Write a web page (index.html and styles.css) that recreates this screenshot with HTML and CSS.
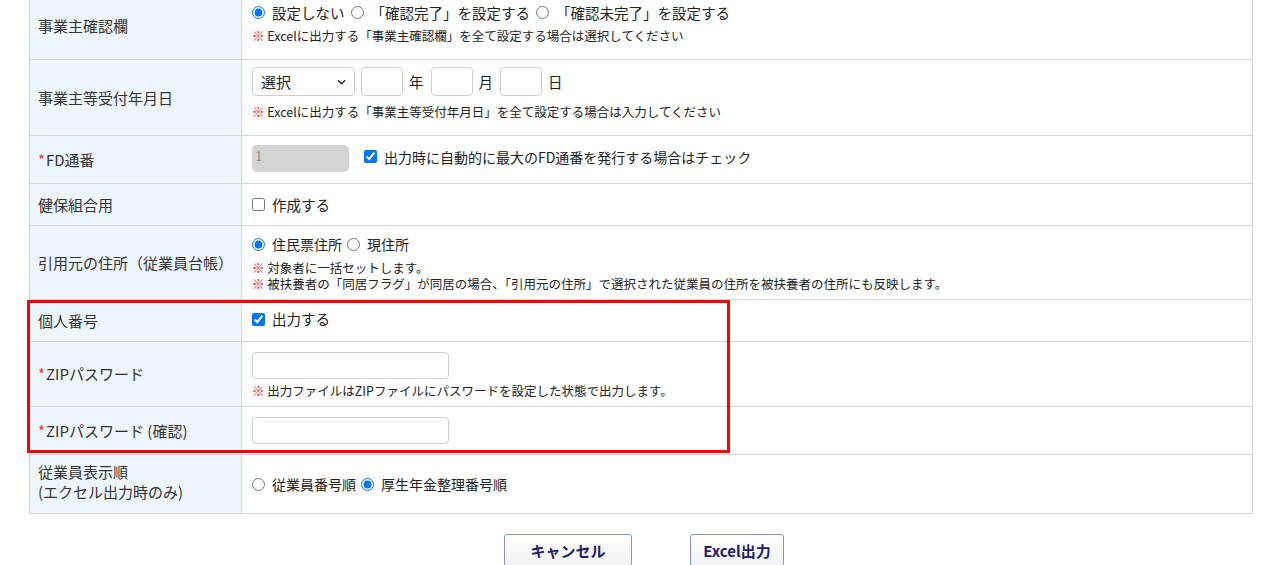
FILE: index.html
```html
<!DOCTYPE html>
<html lang="ja">
<head>
<meta charset="utf-8">
<title>出力設定</title>
<link rel="stylesheet" href="styles.css">
</head>
<body>
<div class="page">
  <div class="form-table">
    <div class="row row-1">
      <div class="label">事業主確認欄</div>
      <div class="field">
        <div class="opts">
          <label class="opt"><input type="radio" name="kakunin" checked>設定しない</label>
          <label class="opt"><input type="radio" name="kakunin">「確認完了」を設定する</label>
          <label class="opt"><input type="radio" name="kakunin">「確認未完了」を設定する</label>
        </div>
        <p class="note"><span class="mark">※</span> Excelに出力する「事業主確認欄」を全て設定する場合は選択してください</p>
      </div>
    </div>
    <div class="row row-2">
      <div class="label">事業主等受付年月日</div>
      <div class="field">
        <div class="date">
          <div class="select"><span>選択</span><svg class="chev" viewBox="0 0 10 6" width="9" height="6"><path d="M1 1l4 4 4-4" fill="none" stroke="#222" stroke-width="1.6"/></svg></div>
          <input class="box small" type="text"><span class="unit">年</span>
          <input class="box small" type="text"><span class="unit">月</span>
          <input class="box small" type="text"><span class="unit">日</span>
        </div>
        <p class="note note-gap"><span class="mark">※</span> Excelに出力する「事業主等受付年月日」を全て設定する場合は入力してください</p>
      </div>
    </div>
    <div class="row row-3">
      <div class="label"><span class="req">*</span>FD通番</div>
      <div class="field inline">
        <div class="box disabled">1</div>
        <label class="opt fd"><input type="checkbox" checked>出力時に自動的に最大のFD通番を発行する場合はチェック</label>
      </div>
    </div>
    <div class="row row-4">
      <div class="label">健保組合用</div>
      <div class="field">
        <label class="opt"><input type="checkbox">作成する</label>
      </div>
    </div>
    <div class="row row-5">
      <div class="label">引用元の住所（従業員台帳）</div>
      <div class="field">
        <div class="opts tight">
          <label class="opt"><input type="radio" name="addr" checked>住民票住所</label>
          <label class="opt"><input type="radio" name="addr">現住所</label>
        </div>
        <p class="note note-top"><span class="mark">※</span> 対象者に一括セットします。</p>
        <p class="note"><span class="mark">※</span> 被扶養者の「同居フラグ」が同居の場合、「引用元の住所」で選択された従業員の住所を被扶養者の住所にも反映します。</p>
      </div>
    </div>
    <div class="row row-6">
      <div class="label">個人番号</div>
      <div class="field">
        <label class="opt"><input type="checkbox" checked>出力する</label>
      </div>
    </div>
    <div class="row row-7">
      <div class="label"><span class="req">*</span>ZIPパスワード</div>
      <div class="field">
        <input class="box wide" type="password">
        <p class="note"><span class="mark">※</span> 出力ファイルはZIPファイルにパスワードを設定した状態で出力します。</p>
      </div>
    </div>
    <div class="row row-8">
      <div class="label"><span class="req">*</span>ZIPパスワード (確認)</div>
      <div class="field">
        <input class="box wide" type="password">
      </div>
    </div>
    <div class="row row-9">
      <div class="label two">従業員表示順<br>(エクセル出力時のみ)</div>
      <div class="field">
        <div class="opts tight">
          <label class="opt"><input type="radio" name="order">従業員番号順</label>
          <label class="opt"><input type="radio" name="order" checked>厚生年金整理番号順</label>
        </div>
      </div>
    </div>
    <div class="highlight"></div>
  </div>
  <div class="actions">
    <button class="btn btn-cancel" type="button">キャンセル</button>
    <button class="btn btn-excel" type="button">Excel出力</button>
  </div>
</div>
</body>
</html>
```
FILE: styles.css
```css
* { box-sizing: border-box; }
html, body { margin: 0; padding: 0; background: #fff; }
body {
  font-family: "Noto Sans CJK JP", "Noto Sans", sans-serif;
  color: #222;
  overflow: hidden;
}
.page { padding: 0 27px 0 29px; margin-top: -8px; }
.form-table {
  position: relative;
  width: 1224px;
  border-left: 1px solid #d6d6d6;
  border-right: 1px solid #d6d6d6;
}
.row {
  display: grid;
  grid-template-columns: 212px 1fr;
  border-bottom: 1px solid #d6d6d6;
}
.row-1 { height: 68px; }
.row-2 { height: 76px; }
.row-3 { height: 48px; }
.row-4 { height: 42px; }
.row-5 { height: 74px; }
.row-6 { height: 42px; }
.row-7 { height: 65px; }
.row-8 { height: 48px; }
.row-9 { height: 59px; }
.label {
  background: #edf5fd;
  border-right: 1px solid #d6d6d6;
  padding: 0 8px;
  display: flex;
  align-items: center;
  font-size: 15px;
  color: #333;
  line-height: 20px;
}
.label.two { padding-bottom: 4px; }
.req { color: #e53935; margin-right: 1px; }
.field {
  padding: 0 10px;
  display: flex;
  flex-direction: column;
  justify-content: center;
  align-items: flex-start;
  font-size: 14.5px;
}
.row-1 .field { padding-bottom: 6px; }
.row-2 .field { justify-content: flex-start; padding-top: 7px; }
.row-6 .field { padding-bottom: 3px; }
.field.inline { flex-direction: row; align-items: center; justify-content: flex-start; }
.opts { display: flex; align-items: center; gap: 6px; line-height: 22px; }
.opts.tight { font-size: 14px; gap: 5px; }
.opt { display: inline-flex; align-items: center; line-height: 22px; white-space: nowrap; }
.opt input { margin: 0 7px 0 0; width: 13px; height: 13px; }
.opt.fd { font-size: 14px; margin-left: 15px; margin-top: -6px; }
.note {
  margin: 0;
  font-size: 12.5px;
  line-height: 16px;
  color: #222;
  margin-top: 4px;
  white-space: nowrap;
}
.note-gap { margin-top: 8px; }
.note-top { margin-top: 5px; }
.note + .note { margin-top: 0; }
.mark { color: #ff0000; font-weight: bold; }
.date { display: flex; align-items: center; gap: 6px; }
.select {
  width: 103px;
  height: 29px;
  border: 1px solid #cfcfcf;
  border-radius: 4px;
  display: flex;
  align-items: center;
  justify-content: space-between;
  padding: 0 8px 0 8px;
  font-size: 15px;
  background: #fff;
}
.box {
  border: 1px solid #cfcfcf;
  border-radius: 4px;
  background: #fff;
  font: inherit;
  outline: none;
}
.box.small { width: 42px; height: 29px; padding: 0; }
.unit { margin: 0 1px 0 0; font-size: 14.5px; }
.box.wide { width: 197px; height: 27px; padding: 0 6px; }
.row-7 .box.wide { margin-top: 3px; }
.box.disabled {
  width: 97px;
  height: 27px;
  border: none;
  background: #d4d4d4;
  border-radius: 5px;
  color: #8a8a8a;
  font-family: "Liberation Serif", serif;
  font-size: 15px;
  padding: 3px 3px;
  margin-top: -3px;
}
.highlight {
  position: absolute;
  left: -3px;
  top: 308px;
  width: 703px;
  height: 153px;
  border: 3px solid #ff0000;
  pointer-events: none;
}
.actions {
  display: flex;
  gap: 58px;
  padding-left: 475px;
  margin-top: 20px;
}
.btn {
  height: 32px;
  border: 1.5px solid #8396d2;
  border-radius: 3px;
  background: linear-gradient(#ffffff, #f1f1f1);
  color: #1b2070;
  font-family: "Noto Sans CJK JP", sans-serif;
  font-weight: bold;
  font-size: 15px;
  padding: 0;
}
.btn-cancel { width: 128px; }
.btn-excel { width: 94px; }
```
